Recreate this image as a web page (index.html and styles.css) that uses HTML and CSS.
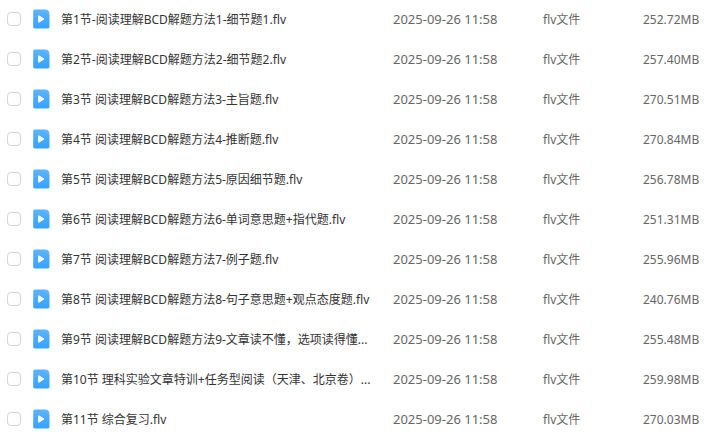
FILE: index.html
```
<!DOCTYPE html>
<html lang="zh-CN">
<head>
  <meta charset="UTF-8">
  <meta name="viewport" content="width=device-width, initial-scale=1.0">
  <title>文件列表</title>
  <link rel="stylesheet" href="styles.css">
</head>
<body>
  <!-- 文件图标 -->
  <svg class="symbols" aria-hidden="true">
    <defs>
      <linearGradient id="fileColor" x1="0" y1="0" x2="0" y2="1">
        <stop offset="0" stop-color="#5cb3ff"/>
        <stop offset="1" stop-color="#35a2ff"/>
      </linearGradient>
    </defs>
    <symbol id="video" viewBox="0 0 17 20">
      <path d="M2 0.5h9.8L16.5 5v12.8a1.8 1.8 0 0 1-1.8 1.8H2a1.8 1.8 0 0 1-1.8-1.8V2.300A1.8 1.8 0 0 1 2 .5z" fill="url(#fileColor)"/>
      <path d="M11.800 .5c2.800 0 4.700 1.700 4.700 4.500z" fill="#48a9fc"/>
      <path d="M5.700 6.700v6.600L11 10z" fill="#fff" stroke="#fff" stroke-width="1" stroke-linejoin="round"/>
    </symbol>
  </svg>

  <table class="file-list">
    <colgroup>
      <col class="col-check">
      <col class="col-name">
      <col class="col-date">
      <col class="col-type">
      <col class="col-size">
    </colgroup>
    <tbody>
      <tr>
        <td><input type="checkbox" id="f1"></td>
        <td><label class="name" for="f1"><svg class="icon"><use href="#video"/></svg><span>第1节-阅读理解BCD解题方法1-细节题1.flv</span></label></td>
        <td class="date">2025-09-26 11:58</td>
        <td class="info">flv文件</td>
        <td class="info">252.72MB</td>
      </tr>
      <tr>
        <td><input type="checkbox" id="f2"></td>
        <td><label class="name" for="f2"><svg class="icon"><use href="#video"/></svg><span>第2节-阅读理解BCD解题方法2-细节题2.flv</span></label></td>
        <td class="date">2025-09-26 11:58</td>
        <td class="info">flv文件</td>
        <td class="info">257.40MB</td>
      </tr>
      <tr>
        <td><input type="checkbox" id="f3"></td>
        <td><label class="name" for="f3"><svg class="icon"><use href="#video"/></svg><span>第3节 阅读理解BCD解题方法3-主旨题.flv</span></label></td>
        <td class="date">2025-09-26 11:58</td>
        <td class="info">flv文件</td>
        <td class="info">270.51MB</td>
      </tr>
      <tr>
        <td><input type="checkbox" id="f4"></td>
        <td><label class="name" for="f4"><svg class="icon"><use href="#video"/></svg><span>第4节 阅读理解BCD解题方法4-推断题.flv</span></label></td>
        <td class="date">2025-09-26 11:58</td>
        <td class="info">flv文件</td>
        <td class="info">270.84MB</td>
      </tr>
      <tr>
        <td><input type="checkbox" id="f5"></td>
        <td><label class="name" for="f5"><svg class="icon"><use href="#video"/></svg><span>第5节 阅读理解BCD解题方法5-原因细节题.flv</span></label></td>
        <td class="date">2025-09-26 11:58</td>
        <td class="info">flv文件</td>
        <td class="info">256.78MB</td>
      </tr>
      <tr>
        <td><input type="checkbox" id="f6"></td>
        <td><label class="name" for="f6"><svg class="icon"><use href="#video"/></svg><span>第6节 阅读理解BCD解题方法6-单词意思题+指代题.flv</span></label></td>
        <td class="date">2025-09-26 11:58</td>
        <td class="info">flv文件</td>
        <td class="info">251.31MB</td>
      </tr>
      <tr>
        <td><input type="checkbox" id="f7"></td>
        <td><label class="name" for="f7"><svg class="icon"><use href="#video"/></svg><span>第7节 阅读理解BCD解题方法7-例子题.flv</span></label></td>
        <td class="date">2025-09-26 11:58</td>
        <td class="info">flv文件</td>
        <td class="info">255.96MB</td>
      </tr>
      <tr>
        <td><input type="checkbox" id="f8"></td>
        <td><label class="name" for="f8"><svg class="icon"><use href="#video"/></svg><span>第8节 阅读理解BCD解题方法8-句子意思题+观点态度题.flv</span></label></td>
        <td class="date">2025-09-26 11:58</td>
        <td class="info">flv文件</td>
        <td class="info">240.76MB</td>
      </tr>
      <tr>
        <td><input type="checkbox" id="f9"></td>
        <td><label class="name" for="f9"><svg class="icon"><use href="#video"/></svg><span>第9节 阅读理解BCD解题方法9-文章读不懂，选项读得懂...</span></label></td>
        <td class="date">2025-09-26 11:58</td>
        <td class="info">flv文件</td>
        <td class="info">255.48MB</td>
      </tr>
      <tr>
        <td><input type="checkbox" id="f10"></td>
        <td><label class="name" for="f10"><svg class="icon"><use href="#video"/></svg><span>第10节 理科实验文章特训+任务型阅读（天津、北京卷）...</span></label></td>
        <td class="date">2025-09-26 11:58</td>
        <td class="info">flv文件</td>
        <td class="info">259.98MB</td>
      </tr>
      <tr>
        <td><input type="checkbox" id="f11"></td>
        <td><label class="name" for="f11"><svg class="icon"><use href="#video"/></svg><span>第11节 综合复习.flv</span></label></td>
        <td class="date">2025-09-26 11:58</td>
        <td class="info">flv文件</td>
        <td class="info">270.03MB</td>
      </tr>
    </tbody>
  </table>
</body>
</html>
```
FILE: styles.css
```
/* 页面 */
body {
  margin: 0;
  background-color: #fff;
  font-family: "Noto Sans", "Noto Sans CJK SC", sans-serif;
  font-size: 12px;
  line-height: 18px;
  color: #666;
  overflow: hidden;
}
.symbols {
  display: block;
  width: 0;
  height: 0;
}
/* 文件列表 */
.file-list {
  width: 100%;
  table-layout: fixed;
  border-collapse: collapse;
}
.file-list td {
  box-sizing: border-box;
  height: 40px;
  padding: 0 0 2px;
  vertical-align: middle;
  white-space: nowrap;
}
.file-list td:first-child {
  padding-left: 7px;
}
.file-list .info {
  padding-bottom: 0;
}
.col-check {
  width: 33px;
}
.col-date {
  width: 150px;
}
.col-type {
  width: 100px;
}
.col-size {
  width: 64px;
}
/* 复选框 */
input[type="checkbox"] {
  appearance: none;
  display: block;
  box-sizing: border-box;
  width: 14px;
  height: 14px;
  margin: 0;
  border: 1px solid #d4d4d4;
  border-radius: 4px;
  background-color: #fff;
}
input[type="checkbox"]:checked {
  border-color: #35a2ff;
  background-color: #35a2ff;
}
/* 文件名 */
.name {
  display: flex;
  align-items: center;
  gap: 11px;
  color: #333;
}
.name span {
  padding-top: 2px;
}
.icon {
  flex: none;
  width: 17px;
  height: 20px;
}
.date {
  font-size: 13px;
}
```
